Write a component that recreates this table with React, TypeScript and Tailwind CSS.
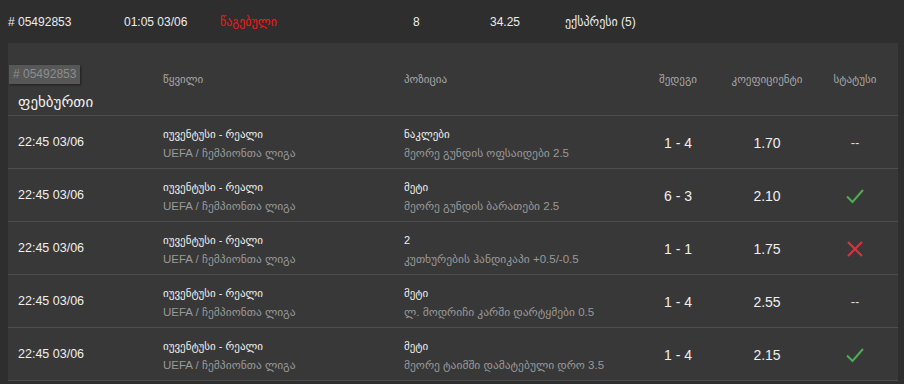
import React from 'react';

type Bet = {
  time: string;
  match: string;
  league: string;
  pick: string;
  market: string;
  score: string;
  odds: string;
  status: 'won' | 'lost' | 'open';
};

const bets: Bet[] = [
  { time: '22:45 03/06', match: 'იუვენტუსი - რეალი', league: 'UEFA / ჩემპიონთა ლიგა', pick: 'ნაკლები', market: 'მეორე გუნდის ოფსაიდები 2.5', score: '1 - 4', odds: '1.70', status: 'open' },
  { time: '22:45 03/06', match: 'იუვენტუსი - რეალი', league: 'UEFA / ჩემპიონთა ლიგა', pick: 'მეტი', market: 'მეორე გუნდის ბარათები 2.5', score: '6 - 3', odds: '2.10', status: 'won' },
  { time: '22:45 03/06', match: 'იუვენტუსი - რეალი', league: 'UEFA / ჩემპიონთა ლიგა', pick: '2', market: 'კუთხურების ჰანდიკაპი +0.5/-0.5', score: '1 - 1', odds: '1.75', status: 'lost' },
  { time: '22:45 03/06', match: 'იუვენტუსი - რეალი', league: 'UEFA / ჩემპიონთა ლიგა', pick: 'მეტი', market: 'ლ. მოდრიჩი კარში დარტყმები 0.5', score: '1 - 4', odds: '2.55', status: 'open' },
  { time: '22:45 03/06', match: 'იუვენტუსი - რეალი', league: 'UEFA / ჩემპიონთა ლიგა', pick: 'მეტი', market: 'მეორე ტაიმში დამატებული დრო 3.5', score: '1 - 4', odds: '2.15', status: 'won' },
];

function Status({ status }: { status: Bet['status'] }) {
  if (status === 'won') {
    return (
      <svg width="20" height="16" viewBox="0 0 20 16" fill="none">
        <path d="M2 8.5 L7.5 14 L18 2" stroke="#4cae4f" strokeWidth="2" />
      </svg>
    );
  }
  if (status === 'lost') {
    return (
      <svg width="18" height="18" viewBox="0 0 18 18" fill="none">
        <path d="M2 2 L16 16 M16 2 L2 16" stroke="#d9323e" strokeWidth="2.2" />
      </svg>
    );
  }
  return <span className="text-[13px] text-[#dcdcdc]">--</span>;
}

export default function App() {
  return (
    <div
      className="w-[904px] h-[384px] overflow-hidden bg-[#2e2e2e] text-[#e6e6e6]"
      style={{ fontFamily: '"Liberation Sans", "DejaVu Sans", sans-serif' }}
    >
      {/* ticket summary */}
      <div className="flex items-center h-[43px] text-[12px] text-[#ececec]">
        <div className="w-[124px] pl-2">#&nbsp;05492853</div>
        <div className="w-[96px]">01:05 03/06</div>
        <div className="w-[193px] text-[#f01c1c]">წაგებული</div>
        <div className="w-[77px]">8</div>
        <div className="w-[75px]">34.25</div>
        <div>ექსპრესი (5)</div>
      </div>

      {/* details */}
      <div className="ml-2 mr-[6px] bg-[#383838]">
        <div className="relative grid grid-cols-[155px_241px_230px_88px_90px_86px] h-[73px] border-b border-[#4e4e4e] text-[11px] text-[#a8a8a8]">
          <div className="relative">
            <div className="absolute left-[1px] top-[22px] px-[4px] h-[19px] leading-[19px] bg-[#575757] text-[#8d8d8d] text-[12px] shadow-[1px_1px_2px_rgba(0,0,0,0.45)]">
              #&nbsp;05492853
            </div>
            <div className="absolute left-[10px] top-[48px] text-[15px] text-[#f2f2f2]">ფეხბურთი</div>
          </div>
          <div className="pt-[28px]">წყვილი</div>
          <div className="pt-[28px]">პოზიცია</div>
          <div className="pt-[28px] text-center">შედეგი</div>
          <div className="pt-[28px] text-center">კოეფიციენტი</div>
          <div className="pt-[28px] text-center">სტატუსი</div>
        </div>

        {bets.map((b, i) => (
          <div
            key={i}
            className="grid grid-cols-[155px_241px_230px_88px_90px_86px] items-center h-[53px] border-b border-[#4e4e4e]"
          >
            <div className="pl-[10px] text-[12.5px] text-[#efefef] pt-[1px]">{b.time}</div>
            <div className="flex flex-col gap-[5px] pt-[2px]">
              <div className="text-[11px] text-[#f0f0f0] leading-[14px]">{b.match}</div>
              <div className="text-[11.5px] text-[#9a9a9a] leading-[14px]">{b.league}</div>
            </div>
            <div className="flex flex-col gap-[5px] pt-[2px]">
              <div className="text-[11px] text-[#f0f0f0] leading-[14px]">{b.pick}</div>
              <div className="text-[11.5px] text-[#9a9a9a] leading-[14px]">{b.market}</div>
            </div>
            <div className="text-center text-[14px] text-[#efefef] pt-[2px]">{b.score}</div>
            <div className="text-center text-[14px] text-[#efefef] pt-[2px]">{b.odds}</div>
            <div className="flex justify-center pt-[2px]">
              <Status status={b.status} />
            </div>
          </div>
        ))}
      </div>
    </div>
  );
}
